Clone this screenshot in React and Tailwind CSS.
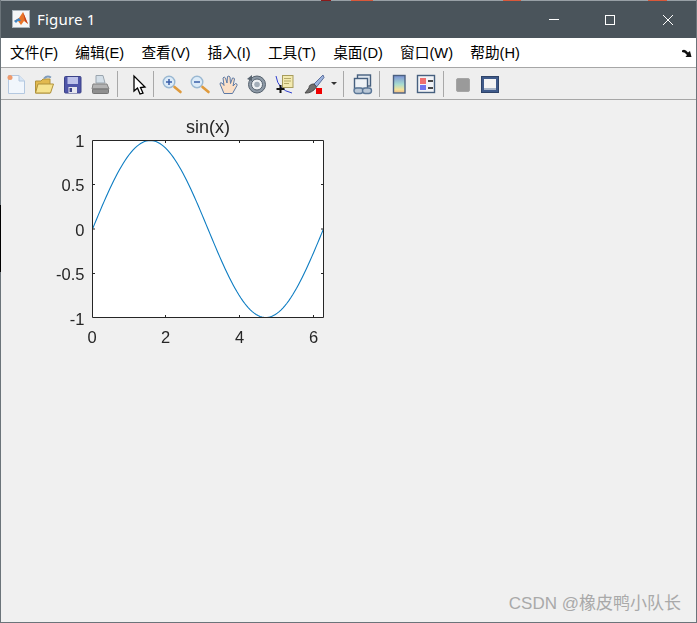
const menus = ["文件(F)", "编辑(E)", "查看(V)", "插入(I)", "工具(T)", "桌面(D)", "窗口(W)", "帮助(H)"];

// sin(x) sampled into the axes box, in the svg's own coordinates
const sinePoints = Array.from({ length: 121 }, (_, i) => {
  const t = (i / 120) * 2 * Math.PI;
  const x = 52.5 + (t / 6.2832) * 231;
  const y = 119 - Math.sin(t) * 88.5;
  return `${x.toFixed(2)},${y.toFixed(2)}`;
}).join(" ");

function Separator() {
  return <div className="w-px h-[26px] shrink-0 bg-[#a8a8a8]" />;
}

function Icon({ width = "w-[28px]", children }) {
  return (
    <div className={`${width} h-[31px] shrink-0 flex items-center justify-center`}>
      <svg className="shrink-0" width="22" height="22" viewBox="0 0 22 22">
        {children}
      </svg>
    </div>
  );
}

function MatlabLogo() {
  return (
    <svg className="-mt-[2px]" width="18" height="18" viewBox="0 0 18 18">
      <rect x="0.5" y="0.5" width="17" height="17" fill="#f4f6f8" stroke="#aab4bc" />
      <path d="M2 11 L7 8 L11 2 L16 14 L12 11 L9 15 L6 11 Z" fill="#e8752a" />
      <path d="M2 11 L7 8 L9 11 L6 11 L4 13 Z" fill="#3f86c6" />
      <path d="M11 2 L16 14 L13 11 Z" fill="#c23f1f" />
    </svg>
  );
}

export default function App() {
  return (
    <div className="relative w-[697px] h-[623px] flex flex-col bg-[#f0f0f0] border-x border-b border-[#6b747a] font-['Liberation_Sans',sans-serif]">
      {/* bit of the desktop showing above the window */}
      <div className="h-px shrink-0 bg-[#98a0a6] flex">
        <div className="w-[320px]" />
        <div className="w-[10px] bg-[#8a1a1a]" />
        <div className="w-[20px]" />
        <div className="w-[22px] bg-[#d9583a]" />
        <div className="w-[130px]" />
        <div className="w-[18px] bg-[#d9583a]" />
        <div className="w-[127px]" />
        <div className="w-[19px] bg-[#d9583a]" />
      </div>

      {/* title bar */}
      <div className="h-[37px] shrink-0 bg-[#4a545b] flex items-center text-white pl-[11px]">
        <MatlabLogo />
        <span className="ml-[7px] text-[15px] font-['Noto_Sans',sans-serif] tracking-[0.2px]">Figure 1</span>
        <div className="ml-auto flex items-center">
          <div className="w-[52px] h-[37px] flex items-center justify-center">
            <div className="w-[10px] h-px bg-white" />
          </div>
          <div className="w-[60px] h-[37px] flex items-center justify-center">
            <div className="w-[10px] h-[10px] border border-white" />
          </div>
          <div className="w-[56px] h-[37px] flex items-center justify-center">
            <svg width="10" height="10" viewBox="0 0 10 10">
              <path d="M0 0 L10 10 M10 0 L0 10" stroke="#fff" strokeWidth="1" />
            </svg>
          </div>
        </div>
      </div>

      {/* menu bar */}
      <div className="h-[29px] shrink-0 bg-white flex items-center pl-[9px] gap-[17.25px] text-[14.67px] text-black font-['Liberation_Sans','Noto_Sans_CJK_SC',sans-serif]">
        {menus.map((m) => (
          <span key={m}>{m}</span>
        ))}
        <svg className="ml-auto mr-[4px]" width="10" height="8" viewBox="0 0 10 8">
          <path d="M0 1.5 Q3 -0.5 6 3.5 L8 2 L9.5 8 L3.5 8 L5 6 Q3 3 0 3 Z" fill="#111" />
        </svg>
      </div>

      {/* toolbar */}
      <div className="h-[33px] shrink-0 bg-[#eeeeee] border-y border-[#a6a6a6] flex items-center">
        <Icon>
          <path d="M4.5 2.5 H15 L20.5 8 V20.5 H4.5 Z" fill="#f1f6fc" stroke="#b4c8e0" />
          <path d="M15 2.5 V8 H20.5" fill="#d7e5f4" stroke="#b4c8e0" />
          <circle cx="6" cy="4.5" r="2.5" fill="#ee9a6c" />
        </Icon>
        <Icon width="w-[30px]">
          <path d="M2.5 8 H8 L10 6 H17 V20 H2.5 Z" fill="#e2b94f" stroke="#b0913a" />
          <path d="M2.5 20 L5 11 H20.5 L17.5 20 Z" fill="#f6e38f" stroke="#b0913a" />
          <path d="M11 5.5 Q14 2 18 4.5" fill="none" stroke="#7f9cbc" strokeWidth="1.8" />
        </Icon>
        <Icon>
          <rect x="2.5" y="3.5" width="16.5" height="16.5" rx="1" fill="#4f55a8" stroke="#3c4388" />
          <rect x="5.5" y="4" width="10.5" height="7" fill="#bcc1ea" />
          <rect x="6.5" y="14" width="8.5" height="6" fill="#e6e6ee" />
          <rect x="7.5" y="15" width="2.5" height="4" fill="#3c4388" />
        </Icon>
        <Icon width="w-[26px]">
          <path d="M7 2.5 H14 L16 10 H7 Z" fill="#d4dfe8" stroke="#9aa5ae" />
          <path d="M4 11 H18 L20 16 H3 Z" fill="#b3b3b3" stroke="#828282" />
          <rect x="3.5" y="16" width="16" height="4.5" rx="1" fill="#8f8f8f" stroke="#757575" />
        </Icon>
        <div className="w-[4px] shrink-0" />
        <Separator />
        <Icon width="w-[35px]">
          <path d="M9 3 V18 L12.5 15 L15 21 L18 20 L15.5 14.5 L20 14 Z" fill="#fff" stroke="#000" strokeWidth="1.3" />
        </Icon>
        <Separator />
        <div className="w-[4px] shrink-0" />
        <Icon>
          <circle cx="8" cy="9" r="5.8" fill="#dcebf8" stroke="#9ab8d2" strokeWidth="1.4" />
          <path d="M5 9 H11 M8 6 V12" stroke="#3a5fa8" strokeWidth="1.5" />
          <path d="M13.5 14 L19.5 19" stroke="#df9a3c" strokeWidth="2.6" strokeLinecap="round" />
        </Icon>
        <Icon>
          <circle cx="8" cy="9" r="5.8" fill="#dcebf8" stroke="#9ab8d2" strokeWidth="1.4" />
          <path d="M5 9 H11" stroke="#3a5fa8" strokeWidth="1.5" />
          <path d="M13.5 14 L19.5 19" stroke="#df9a3c" strokeWidth="2.6" strokeLinecap="round" />
        </Icon>
        <Icon>
          <path d="M7 20.5 L3 11 Q3 9 5 10 L7 12.5 L6 5 Q7 3 8.5 5 L10 10 L10.5 3.5 Q12 2.5 13 4 L13.5 10.5 L15.5 5 Q17 4.5 17.5 6 L16 13 L18.5 10.5 Q20.5 10.5 20 12.5 L15.5 20.5 Z" fill="#fbe0c8" stroke="#5d7aa6" />
        </Icon>
        <Icon>
          <circle cx="12" cy="11.5" r="8.5" fill="#8d99a6" stroke="#56626e" />
          <circle cx="12" cy="11.5" r="5.5" fill="#eef1f4" stroke="#56626e" />
          <circle cx="12" cy="11.5" r="2.8" fill="#a3aeb9" />
          <path d="M2 6 L7 2 L7 8 Z" fill="#56626e" />
        </Icon>
        <Icon>
          <rect x="9.5" y="2.5" width="10.5" height="12" fill="#f3eab0" stroke="#a79c5c" />
          <path d="M11 5.5 H18 M11 8 H18 M11 10.5 H16" stroke="#b5aa68" />
          <path d="M3 3 Q5 17 19 20" fill="none" stroke="#2f3fd0" />
          <path d="M7.5 12 V20 M3.5 16 H11.5" stroke="#111" strokeWidth="2" />
        </Icon>
        <Icon width="w-[32px]">
          <path d="M20 2 L11 11 L13.5 14 L21 4.5 Z" fill="#9db3dc" stroke="#5b6f9d" />
          <path d="M11 11 Q6 11 6 15 L2 20 Q9 20.5 13.5 14 Z" fill="#6f6f6f" stroke="#4a4a4a" />
          <rect x="13" y="15" width="6" height="6" fill="#f00000" />
        </Icon>
        <div className="w-[8px] shrink-0 flex justify-center">
          <div className="w-0 h-0 border-x-[3px] border-x-transparent border-t-[3px] border-t-[#333]" />
        </div>
        <div className="w-[5px] shrink-0" />
        <Separator />
        <Icon width="w-[35px]">
          <rect x="6.5" y="2" width="13" height="11" fill="#dfe6ee" stroke="#46607f" strokeWidth="1.4" />
          <rect x="3.5" y="5.5" width="13" height="10" fill="#eef2f6" stroke="#46607f" strokeWidth="1.4" />
          <rect x="3" y="15" width="9" height="5.5" rx="2.7" fill="#b9c7d6" stroke="#5b7797" strokeWidth="1.4" />
          <rect x="11.5" y="15" width="9" height="5.5" rx="2.7" fill="#b9c7d6" stroke="#5b7797" strokeWidth="1.4" />
        </Icon>
        <Separator />
        <Icon width="w-[37px]">
          <defs>
            <linearGradient id="cbar" x1="0" y1="0" x2="0" y2="1">
              <stop offset="0" stopColor="#7a90d4" />
              <stop offset="0.5" stopColor="#a7dcd0" />
              <stop offset="0.8" stopColor="#f3e29a" />
              <stop offset="1" stopColor="#eeb784" />
            </linearGradient>
          </defs>
          <rect x="5.5" y="2.5" width="11.5" height="17.5" fill="url(#cbar)" stroke="#4a6080" strokeWidth="1.4" />
        </Icon>
        <Icon width="w-[18px]">
          <rect x="2.5" y="2.5" width="17" height="17" fill="#f1f3f7" stroke="#46607f" strokeWidth="1.4" />
          <rect x="5" y="5" width="6" height="6" fill="#ee6f6f" />
          <rect x="5" y="12" width="6" height="5" fill="#6f74ee" />
          <path d="M13 8 H18 M13 15 H18" stroke="#111" strokeWidth="1.4" />
        </Icon>
        <div className="w-[8px] shrink-0" />
        <Separator />
        <Icon width="w-[38px]">
          <rect x="4.5" y="5.5" width="13" height="13" rx="1.5" fill="#9a9a9a" stroke="#a5a5a5" />
        </Icon>
        <Icon width="w-[16px]">
          <rect x="2.5" y="3.5" width="17" height="16" fill="#3f5a8a" stroke="#2e4368" />
          <rect x="5" y="6" width="12" height="9" fill="#f4f4f4" />
          <rect x="5" y="15" width="12" height="2" fill="#a9b6c9" />
        </Icon>
      </div>

      {/* figure canvas */}
      <div className="flex-1 relative">
        <svg className="mt-[10px] ml-[39px] blur-[0.3px]" width="300" height="240" viewBox="0 0 300 240">
          <rect x="52.5" y="30.5" width="231" height="177" fill="#fff" />
          <polyline points={sinePoints} fill="none" stroke="#0c7cc2" strokeWidth="1.1" />
          <path d="M52.5 30.5 H283.5 V207.5 H52.5 Z" fill="none" stroke="#262626" strokeWidth="1" />
          <path
            d="M125.5 207 V205 M199.5 207 V205 M273.5 207 V205 M125.5 31 V33 M199.5 31 V33 M273.5 31 V33 M53 74.5 H55 M53 119 H55 M53 163.5 H55 M283 74.5 H281 M283 119 H281 M283 163.5 H281"
            stroke="#262626"
            strokeWidth="1"
          />
          <g fill="#262626" fontFamily="'Liberation Sans', sans-serif" fontSize="16.5">
            <text x="168" y="23" fontSize="18" textAnchor="middle">sin(x)</text>
            <g textAnchor="end">
              <text x="44.5" y="37">1</text>
              <text x="44.5" y="81">0.5</text>
              <text x="44.5" y="126">0</text>
              <text x="44.5" y="170">-0.5</text>
              <text x="44.5" y="215">-1</text>
            </g>
            <g textAnchor="middle">
              <text x="52" y="233">0</text>
              <text x="125.5" y="233">2</text>
              <text x="199.5" y="233">4</text>
              <text x="273.5" y="233">6</text>
            </g>
          </g>
        </svg>
        {/* watermark */}
        <div className="absolute right-[15px] bottom-[6px] text-[17px] text-[#a9a9a9] font-['Liberation_Sans','Noto_Sans_CJK_SC',sans-serif]">
          CSDN @橡皮鸭小队长
        </div>
      </div>

      {/* dark sliver of whatever sits behind the window's left edge */}
      <div className="absolute -left-px top-[205px] w-px h-[67px] bg-black" />
    </div>
  );
}
